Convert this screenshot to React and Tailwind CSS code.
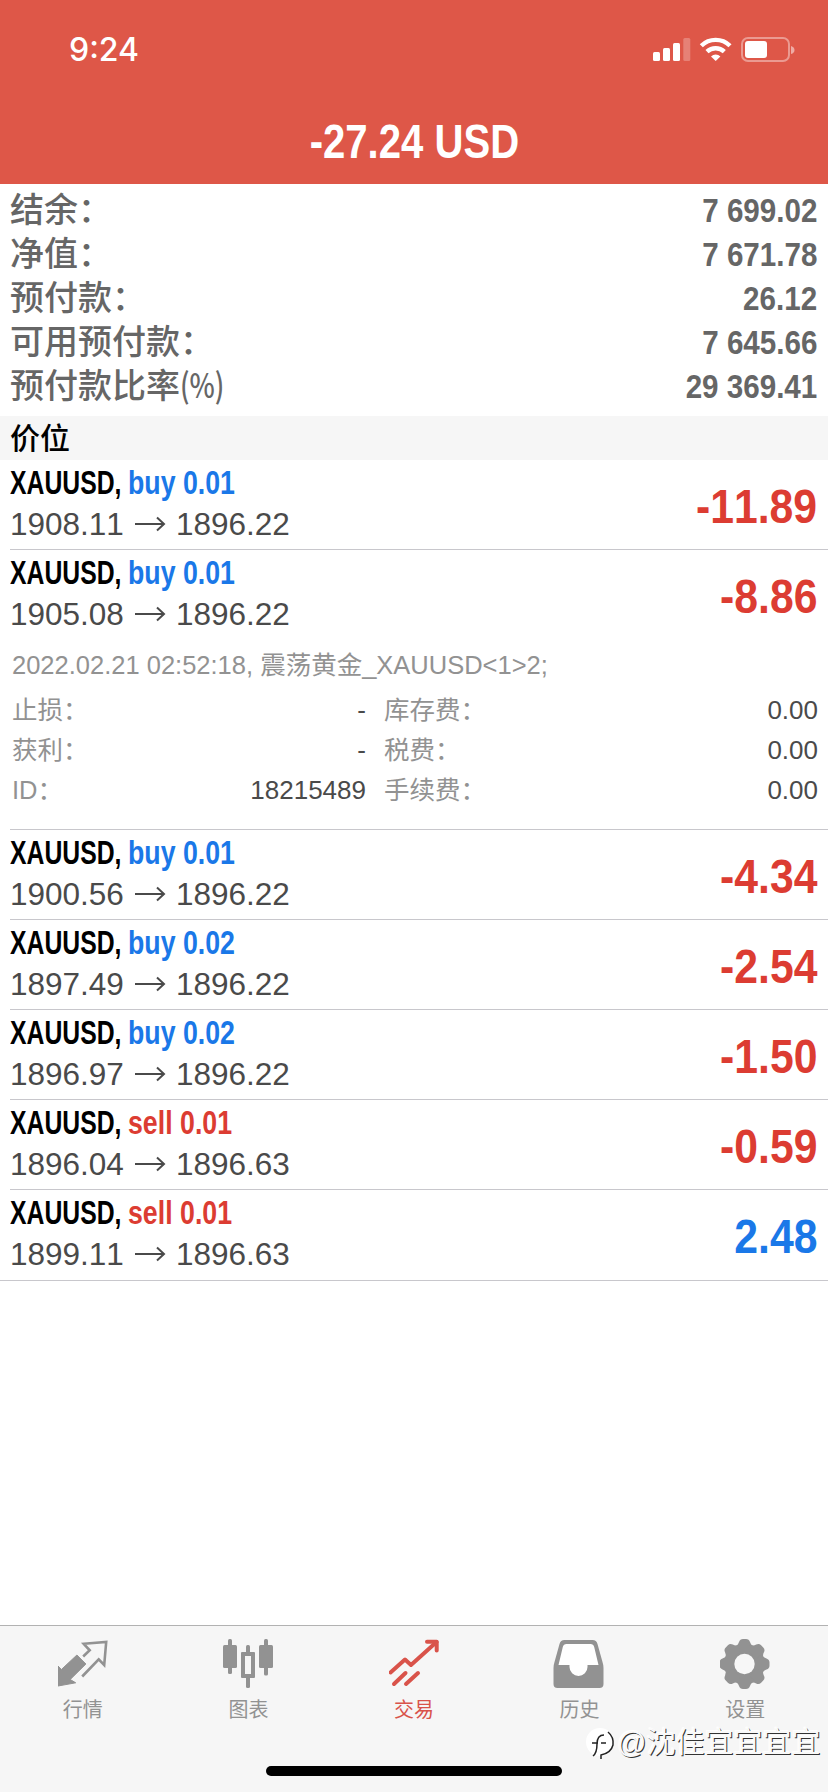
import clsx from 'clsx'

const SUMMARY = [
  { label: '结余：', value: '7 699.02' },
  { label: '净值：', value: '7 671.78' },
  { label: '预付款：', value: '26.12' },
  { label: '可用预付款：', value: '7 645.66' },
  { label: '预付款比率', suffix: '(%)', value: '29 369.41' },
]

const POSITIONS = [
  { side: 'buy', lots: '0.01', open: '1908.11', now: '1896.22', profit: '-11.89' },
  {
    side: 'buy', lots: '0.01', open: '1905.08', now: '1896.22', profit: '-8.86',
    note: '2022.02.21 02:52:18, 震荡黄金_XAUUSD<1>2;',
    details: [
      ['止损：', '-', '库存费：', '0.00'],
      ['获利：', '-', '税费：', '0.00'],
      ['ID：', '18215489', '手续费：', '0.00'],
    ],
  },
  { side: 'buy', lots: '0.01', open: '1900.56', now: '1896.22', profit: '-4.34' },
  { side: 'buy', lots: '0.02', open: '1897.49', now: '1896.22', profit: '-2.54' },
  { side: 'buy', lots: '0.02', open: '1896.97', now: '1896.22', profit: '-1.50' },
  { side: 'sell', lots: '0.01', open: '1896.04', now: '1896.63', profit: '-0.59' },
  { side: 'sell', lots: '0.01', open: '1899.11', now: '1896.63', profit: '2.48' },
]

const TABS = [
  { label: '行情', Icon: QuotesIcon },
  { label: '图表', Icon: ChartIcon },
  { label: '交易', Icon: TradeIcon, active: true },
  { label: '历史', Icon: HistoryIcon },
  { label: '设置', Icon: SettingsIcon },
]

function QuotesIcon() {
  return (
    <svg width="50" height="50" viewBox="0.8 0 50 50" fill="none">
      <path d="M19.700 16 L28.700 25 L13 40.500 L18.500 43.800 L0.8 47 L0.8 27 L4.200 30.500 Z" fill="currentColor" stroke="currentColor" strokeLinejoin="round" />
      <path d="M26 17.500 L32.500 11.300 L26.500 4.800 L49 3 L47 26 L41.500 20.300 L25 37.500" stroke="currentColor" strokeWidth="2.600" />
    </svg>
  )
}

function ChartIcon() {
  return (
    <svg width="50" height="50" viewBox="0 0 50 50" fill="currentColor">
      <rect x="5" y="0" width="4" height="35" rx="1.500" />
      <rect x="0" y="6" width="14" height="23" rx="1.500" />
      <rect x="41" y="0" width="4" height="36.500" rx="1.500" />
      <rect x="36" y="6" width="14" height="23" rx="1.500" />
      <rect x="23" y="6" width="4" height="9" rx="1.500" />
      <rect x="23" y="37" width="4" height="12" rx="1.500" />
      <path fillRule="evenodd" d="M19 13h12a1 1 0 0 1 1 1v24a1 1 0 0 1-1 1H19a1 1 0 0 1-1-1V14a1 1 0 0 1 1-1Zm3 4v18h6V17Z" />
    </svg>
  )
}

function TradeIcon() {
  return (
    <svg width="50" height="50" viewBox="0.5 0 50 50" fill="none" stroke="currentColor" strokeWidth="4" strokeLinecap="round" strokeLinejoin="round">
      <path d="M2 33.500 L16.500 20.500 L22.500 26 L48 3" />
      <path d="M38.500 2.800 H48.200 V11.500" />
      <path d="M5.500 45 L17 34" />
      <path d="M17.500 45 L29.500 34" />
    </svg>
  )
}

function HistoryIcon() {
  return (
    <svg width="50" height="50" viewBox="1.500 0 50 50" fill="currentColor" overflow="visible">
      <path fillRule="evenodd" d="M11 1h28q4 0 5 4l5 18q1 3 1 6v16q0 4-4 4H4q-4 0-4-4V29q0-3 1-6L6 5q1-4 5-4Z" />
      <path fill="#fff" d="M13 5h24q3 0 3.700 3l4.300 18H34v2a9 9 0 0 1-18 0v-2H5l4.300-18q.7-3 3.700-3Z" />
    </svg>
  )
}

function SettingsIcon() {
  return (
    <svg width="50" height="50" viewBox="0.5 0 50 50" fill="currentColor">
      <circle cx="25" cy="25" r="19.500" />
      {[0, 45, 90, 135, 180, 225, 270, 315].map(a => (
        <path key={a} transform={`rotate(${a} 25 25)`} d="M15 7.500 Q18.500 6.500 19.500 3 Q20.500 0 23.500 0 H26.500 Q29.500 0 30.500 3 Q31.500 6.500 35 7.500 L30 13 H20 Z" />
      ))}
      <circle cx="25" cy="25" r="10.200" fill="#f7f7f7" />
    </svg>
  )
}

function StatusIcons() {
  return (
    <svg width="144" height="26" viewBox="0 0 144 26" fill="#fff">
      <rect x="2" y="15" width="7" height="9" rx="1.500" />
      <rect x="12" y="11" width="7" height="13" rx="1.500" />
      <rect x="22" y="6" width="7" height="18" rx="1.500" />
      <rect x="32.300" y="1" width="7" height="23" rx="1.500" opacity=".25" />
      <g fill="none" stroke="#fff" strokeWidth="4.400">
        <path d="M50.300 8.700 A20.500 20.500 0 0 1 79 8.700" />
        <path d="M56 14.700 A12.500 12.500 0 0 1 73.300 14.700" />
      </g>
      <path d="M64.700 24 L60 19.400 A7 7 0 0 1 69.400 19.400 Z" />
      <rect x="91" y="1" width="47" height="23" rx="6" fill="none" stroke="#fff" strokeWidth="2" opacity=".4" />
      <rect x="94" y="4" width="22" height="17" rx="3" />
      <path d="M140 9 q3.500 1 3.500 4 t-3.500 4 Z" opacity=".5" />
    </svg>
  )
}

// bold face squeezed horizontally, the scale comes from className
function Condensed({ className, children }) {
  return <span className={clsx('inline-block font-bold whitespace-pre [font-kerning:none]', className)}>{children}</span>
}

function Position({ item, last }) {
  const { side, lots, open, now, profit, note, details } = item
  return (
    <div className={clsx(details ? 'h-[280px]' : last ? 'h-[91px]' : 'h-[90px]', last ? 'border-b border-[#c8c7cc]' : '')}>
      <div className={clsx('ml-2.5 flex h-full flex-col', !last && 'border-b border-[#c8c7cc]')}>
        <div className="flex h-[90px] shrink-0 items-start justify-between pr-[11px]">
          <div className="flex flex-col pt-0.5">
            <div className="flex h-[42px] text-[33px] leading-[42px] text-black">
              <span className="w-[118px]">
                <Condensed className="origin-left scale-x-[0.75]">XAUUSD,</Condensed>
              </span>
              <Condensed className={clsx('origin-left scale-x-[0.81]', side === 'buy' ? 'text-[#1a78e8]' : 'text-[#dc3c32]')}>{side} {lots}</Condensed>
            </div>
            <div className="flex h-10 items-center text-[31.500px] leading-10 text-[#4a4a4a] [font-kerning:none]">
              <span className="w-[116px]">{open}</span>
              <svg className="mr-[10px] ml-2" width="32" height="16" viewBox="0 0 32 16" fill="none" stroke="currentColor" strokeWidth="2">
                <path d="M1 8H30M23 1.500L30 8L23 14.500" />
              </svg>
              <span>{now}</span>
            </div>
          </div>
          <Condensed className={clsx('origin-right scale-x-[0.89] pt-[17px] text-[48px] leading-[60px]', profit.startsWith('-') ? 'text-[#dc3c32]' : 'text-[#1a78e8]')}>{profit}</Condensed>
        </div>
        {details && (
          <div className="flex flex-col pr-2.5 pl-0.5 text-[25.500px] text-[#929292]">
            <div className="h-[50px] leading-[50px] [font-kerning:none]">{note}</div>
            {details.map(([a, b, c, d]) => (
              <div key={a} className="flex h-10 items-center leading-10">
                <span>{a}</span>
                <span className="ml-auto text-[26px] text-[#4a4a4a]">{b}</span>
                <div className="ml-[18px] flex w-[434px] justify-between">
                  <span>{c}</span>
                  <span className="text-[26px] text-[#4a4a4a]">{d}</span>
                </div>
              </div>
            ))}
          </div>
        )}
      </div>
    </div>
  )
}

export default function App() {
  return (
    <div className="relative flex h-[1792px] w-[828px] flex-col overflow-hidden bg-white font-['Liberation_Sans','Noto_Sans_CJK_SC',sans-serif]">
      <header className="flex h-[184px] shrink-0 flex-col bg-[#de5748] text-white">
        <div className="flex h-[100px] items-center justify-between pr-[33px] pl-[69px]">
          <span className="font-['Inter',sans-serif] text-[32px] font-medium">9:24</span>
          <StatusIcons />
        </div>
        <div className="flex h-[84px] items-center justify-center">
          <Condensed className="scale-x-[0.835] text-[48px] leading-[60px]">-27.24 USD</Condensed>
        </div>
      </header>

      <section className="flex h-[232px] shrink-0 flex-col pt-1 pr-[11px] pl-2.5">
        {SUMMARY.map(({ label, suffix, value }) => (
          <div key={label} className="flex h-11 items-start justify-between text-[34px] leading-[44px] text-[#666]">
            <span className="-mt-px font-['Noto_Sans_CJK_SC',sans-serif] leading-[42px] font-medium">
              {label}
              {suffix && <span className="inline-block origin-left scale-x-[0.79]">{suffix}</span>}
            </span>
            <Condensed className="origin-right scale-x-[0.87]">{value}</Condensed>
          </div>
        ))}
      </section>

      <div className="flex h-11 shrink-0 items-center bg-[#f6f6f6] pl-2.5 text-[30px] font-medium text-black">价位</div>

      <main className="flex flex-1 flex-col">
        {POSITIONS.map((p, i) => (
          <Position key={i} item={p} last={i === POSITIONS.length - 1} />
        ))}
      </main>

      <nav className="flex h-[167px] shrink-0 flex-col items-center justify-between border-t border-[#b2b2b2] bg-[#f6f6f6]">
        <div className="flex w-full">
          {TABS.map(({ label, Icon, active }) => (
            <div key={label} className={clsx('flex flex-1 flex-col items-center pt-[13px] text-xl', active ? 'text-[#d9534a]' : 'text-[#929292]')}>
              <Icon />
              <span className="mt-[7px] leading-7">{label}</span>
            </div>
          ))}
        </div>
        <div className="mb-4 h-2.5 w-[296px] rounded-full bg-black" />
      </nav>

      {/* watermark over the tab bar */}
      <div className="absolute top-[1725px] left-[586px] flex items-center">
        <svg width="31" height="36" viewBox="0 0 31 36">
          <circle cx="14" cy="17" r="14" fill="#fff" />
          <path d="M7 31Q11 28 11 19Q11 10 18 10M6 18H12M15 18H20M22 7Q28 12 27 20Q25 28 15 30V34" fill="none" stroke="#222" strokeWidth="1.500" />
        </svg>
        <span className="text-[29px] leading-9 text-[#fafafa] [text-shadow:1px_1px_0_#333,-1px_-1px_1px_#fff]">@沈佳宜宜宜宜</span>
      </div>
    </div>
  )
}
